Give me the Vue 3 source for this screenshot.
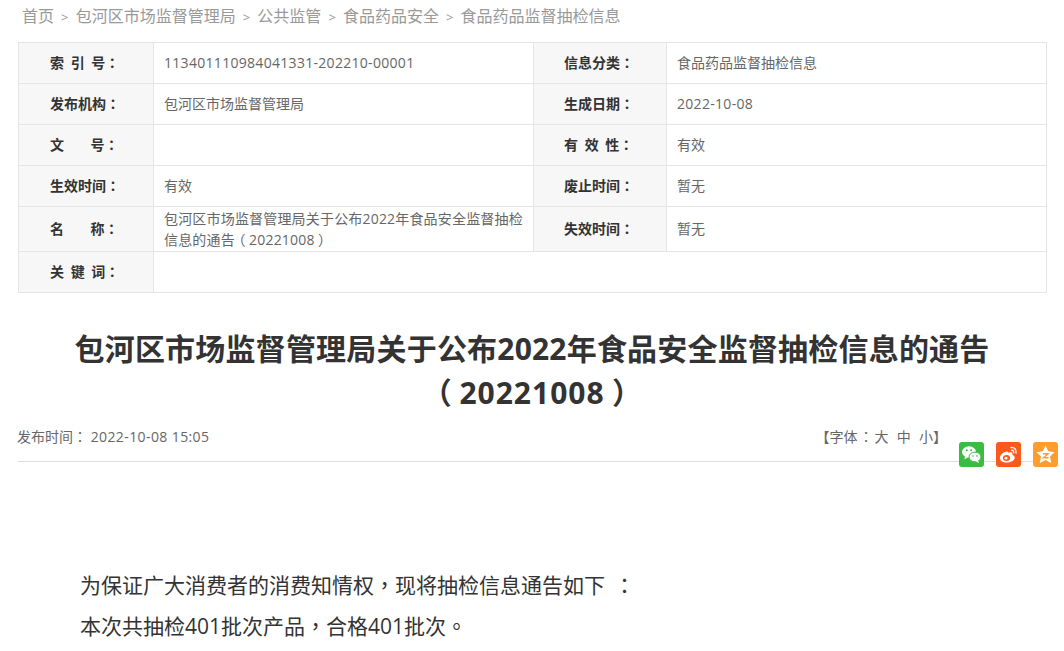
<script setup>
const crumbs = ['首页', '包河区市场监督管理局', '公共监管', '食品药品安全', '食品药品监督抽检信息']
</script>

<template>
  <div class="page">
    <div class="crumbs">
      <template v-for="(c, i) in crumbs" :key="c">
        <span v-if="i > 0" class="sep">&gt;</span>
        <a>{{ c }}</a>
      </template>
    </div>

    <table class="info">
      <colgroup>
        <col style="width: 135px">
        <col style="width: 380px">
        <col style="width: 133px">
        <col style="width: 380px">
      </colgroup>
      <tbody>
        <tr>
          <th>索 引 号<span class="pn">：</span></th>
          <td class="num">113401110984041331-202210-00001</td>
          <th>信息分类<span class="pn">：</span></th>
          <td>食品药品监督抽检信息</td>
        </tr>
        <tr>
          <th>发布机构<span class="pn">：</span></th>
          <td>包河区市场监督管理局</td>
          <th>生成日期<span class="pn">：</span></th>
          <td class="num">2022-10-08</td>
        </tr>
        <tr>
          <th>文&nbsp; &nbsp; 号<span class="pn">：</span></th>
          <td></td>
          <th>有 效 性<span class="pn">：</span></th>
          <td>有效</td>
        </tr>
        <tr>
          <th>生效时间<span class="pn">：</span></th>
          <td>有效</td>
          <th>废止时间<span class="pn">：</span></th>
          <td>暂无</td>
        </tr>
        <tr class="tall">
          <th>名&nbsp; &nbsp; 称<span class="pn">：</span></th>
          <td class="name">包河区市场监督管理局关于公布2022年食品安全监督抽检<br>信息的通告<span class="po">（</span>20221008<span class="pc">）</span></td>
          <th>失效时间<span class="pn">：</span></th>
          <td>暂无</td>
        </tr>
        <tr>
          <th>关 键 词<span class="pn">：</span></th>
          <td colspan="3"></td>
        </tr>
      </tbody>
    </table>

    <h1 class="title">包河区市场监督管理局关于公布2022年食品安全监督抽检信息的通告<br><span class="po">（</span><span class="digits">20221008</span><span class="pc">）</span></h1>

    <div class="meta">
      <span class="date">发布时间<span class="pn">：</span> <span class="num">2022-10-08 15:05</span></span>
      <span class="size">【字体<span class="pn gap">：</span>大&nbsp; 中&nbsp; 小】</span>
      <div class="share">
        <a class="ico wx">
          <svg viewBox="0 0 25 25" width="25" height="25">
            <ellipse cx="10" cy="10" rx="7" ry="5.800" fill="#fff" />
            <path d="M6 14 5.500 17.500 9 15Z" fill="#fff" />
            <ellipse cx="16" cy="15" rx="6" ry="4.900" fill="#fff" stroke="#3bbb3f" stroke-width="1" />
            <path d="M19 18.500 20 21 16.800 19.400Z" fill="#fff" />
            <circle cx="7.800" cy="8.300" r="1" fill="#3bbb3f" />
            <circle cx="12.200" cy="8.300" r="1" fill="#3bbb3f" />
            <circle cx="14" cy="14" r=".8" fill="#3bbb3f" />
            <circle cx="18" cy="14" r=".8" fill="#3bbb3f" />
          </svg>
        </a>
        <a class="ico wb">
          <svg viewBox="0 0 25 25" width="25" height="25">
            <path d="M10.500 9.500C6.500 10.500 3.500 13.500 4 16.500c.5 3 4 4.500 8 4 4-.5 7-2.800 6.700-5.300-.1-1.300-1.200-2-2.400-2.300.5-1.300.3-2.400-1-2.700-1-.2-2 .1-3 .6-.3-.9-1-1.500-1.800-1.300Z" fill="#fff" />
            <ellipse cx="10.500" cy="16" rx="3.600" ry="3" fill="#fc5a1c" />
            <circle cx="10" cy="16.200" r="1.400" fill="#fff" />
            <path d="M15 5.500c3-.6 5.800 2 5 5.500M15.500 8.300c1.500-.3 2.700 1 2.300 2.500" fill="none" stroke="#fff" stroke-width="1.300" stroke-linecap="round" />
          </svg>
        </a>
        <a class="ico qz">
          <svg viewBox="0 0 25 25" width="25" height="25">
            <path d="M12.500 3.500 15.300 9.300 21.500 10.200 17 14.600 18.200 21 12.500 18 6.800 21 8 14.600 3.500 10.200 9.700 9.300Z" fill="#fff" />
            <path d="M10 11.800h5l-4.500 4h5" fill="none" stroke="#ff9c2c" stroke-width="1.400" />
          </svg>
        </a>
      </div>
    </div>

    <div class="body">
      <p>为保证广大消费者的消费知情权<span class="pn">，</span>现将抽检信息通告如下<span class="pn end">：</span></p>
      <p>本次共抽检401批次产品<span class="pn">，</span>合格401批次<span class="pn">。</span></p>
    </div>
  </div>
</template>

<style scoped>
.page {
  width: 1028px;
  padding: 0 0 0 18px;
  font-family: "Open Sans", "Noto Sans CJK SC", sans-serif;
  color: #666;
}

/* centred full-width punctuation */
.pn {
  font-family: "Noto Sans CJK TC", sans-serif;
  line-height: 1;
}

.po,
.pc {
  display: inline-block;
  line-height: 1;
}

.po {
  transform: translateX(-.25em);
}

.pc {
  transform: translateX(.25em);
}

.crumbs {
  height: 42px;
  padding: 6px 0 0 4px;
  box-sizing: border-box;
  font-size: 16px;
  line-height: 21px;
  color: #999;
  white-space: nowrap;
}

.sep {
  margin: 0 7.100px;
  font-size: 13px;
}

.info {
  width: 1027px;
  table-layout: fixed;
  border-collapse: collapse;
  font-size: 14px;
}

.info th,
.info td {
  height: 40px;
  padding: 0 0 1px;
  border: 1px solid #e5e5e5;
  line-height: 21px;
  box-sizing: border-box;
}

.info tr {
  height: 41px;
}

.info tr.tall {
  height: 45px;
}

.info th {
  padding-left: 31px;
  background: #f7f7f7;
  color: #333;
  font-weight: 700;
  word-spacing: 3px;
  text-align: left;
  white-space: pre;
}

.info th:nth-child(3) {
  padding-left: 30px;
}

.info td {
  padding: 0 10px 1px;
}

.info td.num {
  letter-spacing: .3px;
}

.info td.name {
  letter-spacing: .18px;
}

.date .num {
  letter-spacing: .4px;
}

.title {
  margin: 34px 0 0;
  font-size: 30px;
  line-height: 44px;
  font-weight: 700;
  letter-spacing: .2px;
  color: #333;
  text-align: center;
}

.digits {
  letter-spacing: 1px;
}

.meta {
  position: relative;
  display: flex;
  justify-content: space-between;
  height: 49px;
  margin-top: -2px;
  padding-top: 13px;
  box-sizing: border-box;
  border-bottom: 1px solid #ddd;
  font-size: 14px;
  line-height: 22px;
}

.date {
  margin-left: -1px;
}

.size {
  margin-right: 99px;
  word-spacing: .5px;
}

.gap {
  margin: 0 1.500px;
}

.share {
  position: absolute;
  top: 29px;
  right: -12px;
  display: flex;
  gap: 12px;
}

.ico {
  width: 25px;
  height: 25px;
  border-radius: 3px;
}

.ico svg {
  display: block;
}

.wx { background: #3bbb3f; }
.wb { background: #fc5a1c; }
.qz { background: #ff9c2c; }

.body {
  padding: 103px 0 0 62px;
  font-size: 21px;
  line-height: 41px;
  color: #333;
}

.body p {
  margin: 0;
}

.end {
  margin-left: 9px;
}
</style>

<style>
html, body {
  overflow: hidden;
}
</style>
